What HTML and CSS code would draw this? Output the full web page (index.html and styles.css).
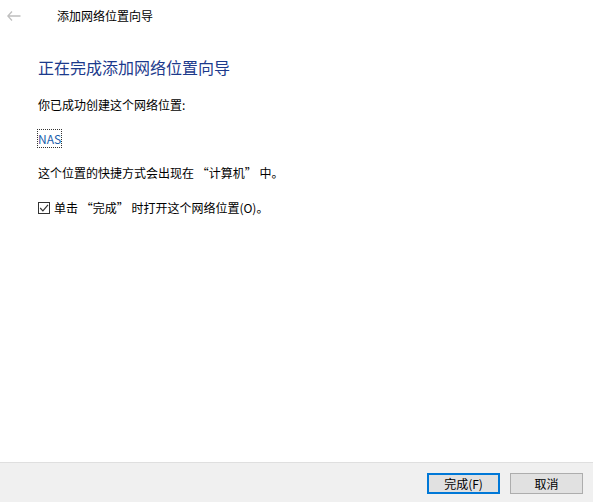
FILE: index.html
```html
<!DOCTYPE html>
<html lang="zh-CN">
<head>
<meta charset="utf-8">
<title>添加网络位置向导</title>
<link rel="stylesheet" href="styles.css">
</head>
<body>
<div class="wizard">
  <div class="titlebar">
    <svg class="back" width="14" height="10" viewBox="0 0 14 10">
      <path d="M5 0.5 L0.8 5 L5 9.5 M0.8 5 H13.5" fill="none" stroke="#bfbfbf" stroke-width="1.3"/>
    </svg>
    <span class="title">添加网络位置向导</span>
  </div>
  <div class="content">
    <h1 class="heading">正在完成添加网络位置向导</h1>
    <p class="line first">你已成功创建这个网络位置:</p>
    <p class="line"><a class="link">NAS</a></p>
    <p class="line">这个位置的快捷方式会出现在 “计算机” 中。</p>
    <label class="check">
      <span class="box">
        <svg width="10" height="10" viewBox="0 0 10 10"><path d="M1.2 5 L3.9 7.8 L9 1.8" fill="none" stroke="#333" stroke-width="1.2"/></svg>
      </span>
      <span>单击 “完成” 时打开这个网络位置(O)。</span>
    </label>
  </div>
  <div class="footer">
    <button class="btn primary">完成(F)</button>
    <button class="btn">取消</button>
  </div>
</div>
</body>
</html>
```
FILE: styles.css
```css
html, body {
  margin: 0;
  padding: 0;
  background: #fff;
}
body {
  font-family: "Noto Sans CJK SC", "Microsoft YaHei", sans-serif;
  font-size: 12px;
  color: #000;
}
.wizard {
  width: 593px;
  height: 502px;
  display: flex;
  flex-direction: column;
}
.titlebar {
  height: 31px;
  display: flex;
  align-items: center;
  padding-left: 7px;
}
.back {
  display: block;
  margin-right: 36px;
}
.title {
  font-size: 12px;
  line-height: 16px;
}
.content {
  flex: 1;
  padding: 25px 0 0 38px;
}
.heading {
  margin: 0;
  font-size: 16px;
  font-weight: normal;
  color: #1c3a8c;
  line-height: 22px;
}
.line {
  margin: 0;
  line-height: 16px;
  margin-top: 18px;
}
.line.first {
  margin-top: 19px;
}
.link {
  color: #1a5dab;
  text-decoration: none;
  outline: 1px dotted #333;
  outline-offset: 0;
}
.check {
  display: flex;
  align-items: center;
  margin-top: 19px;
  line-height: 16px;
}
.box {
  width: 10px;
  height: 10px;
  border: 1px solid #333;
  margin-right: 4px;
  display: flex;
  align-items: center;
  justify-content: center;
}
.box svg {
  display: block;
}
.footer {
  height: 40px;
  border-top: 1px solid #dfdfdf;
  background: #f0f0f0;
  display: flex;
  justify-content: flex-end;
  align-items: flex-start;
  padding: 10px 10px 0 0;
  gap: 10px;
  box-sizing: border-box;
}
.btn {
  width: 73px;
  height: 21px;
  font-family: inherit;
  font-size: 12px;
  line-height: 15px;
  background: #e1e1e1;
  border: 1px solid #adadad;
  color: #000;
  padding: 0;
  box-sizing: border-box;
}
.btn.primary {
  border: 2px solid #0078d7;
}
```
